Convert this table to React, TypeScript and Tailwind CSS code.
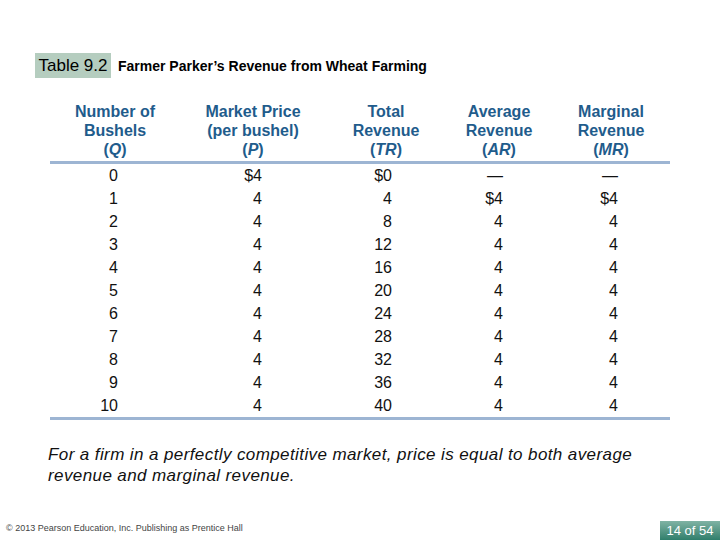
import React from "react";

const rows = [
  ["0", "$4", "$0", "—", "—"],
  ["1", "4", "4", "$4", "$4"],
  ["2", "4", "8", "4", "4"],
  ["3", "4", "12", "4", "4"],
  ["4", "4", "16", "4", "4"],
  ["5", "4", "20", "4", "4"],
  ["6", "4", "24", "4", "4"],
  ["7", "4", "28", "4", "4"],
  ["8", "4", "32", "4", "4"],
  ["9", "4", "36", "4", "4"],
  ["10", "4", "40", "4", "4"],
];

// right padding per column so the numbers line up like the slide
const cellPad = ["pr-[62px]", "pr-[64px]", "pr-[54px]", "pr-[49px]", "pr-[52px]"];

const headers: [string, string, string][] = [
  ["Number of", "Bushels", "Q"],
  ["Market Price", "(per bushel)", "P"],
  ["Total", "Revenue", "TR"],
  ["Average", "Revenue", "AR"],
  ["Marginal", "Revenue", "MR"],
];

export default function App() {
  return (
    <div
      className="relative w-[720px] h-[540px] bg-white flex flex-col overflow-hidden"
      style={{ fontFamily: '"Liberation Sans", Arial, sans-serif' }}
    >
      {/* title */}
      <div className="flex items-center pt-[53px] pl-[35px]">
        <div className="h-[25px] w-[76px] bg-[#b5cdbf] flex items-center justify-center text-[17px] text-black">
          Table 9.2
        </div>
        <div className="ml-[7px] text-[14px] font-bold text-black pt-[2px]">
          Farmer Parker’s Revenue from Wheat Farming
        </div>
      </div>

      {/* table */}
      <div className="ml-[50px] w-[620px] mt-[24px]">
        <div className="grid grid-cols-[130px_146px_120px_106px_118px] text-[16px] font-bold leading-[19px] text-[#1f5c8c] text-center pb-[2px]">
          {headers.map(([a, b, c]) => (
            <div key={a}>
              <div>{a}</div>
              <div>{b}</div>
              <div>
                (<span className="italic">{c}</span>)
              </div>
            </div>
          ))}
        </div>
        <div className="h-[3px] bg-[#9db5d3]" />
        <div className="grid grid-cols-[130px_146px_120px_106px_118px] text-[16px] leading-[23px] text-[#111]">
          {rows.map((r, i) =>
            r.map((v, j) => (
              <div key={i + "-" + j} className={"text-right " + cellPad[j]}>
                {v}
              </div>
            ))
          )}
        </div>
        <div className="h-[3px] bg-[#9db5d3]" />
      </div>

      {/* note */}
      <p className="ml-[48px] mt-[24px] w-[600px] text-[17px] tracking-[0.4px] leading-[21px] italic text-[#111]">
        For a firm in a perfectly competitive market, price is equal to both average revenue and marginal
        revenue.
      </p>

      {/* footer */}
      <div className="mt-auto flex items-end justify-between">
        <div className="pl-[6px] pb-[5px] text-[9px] text-[#444]">
          © 2013 Pearson Education, Inc. Publishing as Prentice Hall
        </div>
        <div className="w-[60px] h-[19px] bg-gradient-to-b from-[#7fb3a4] to-[#2f7f6c] text-white text-[13px] flex items-center justify-center">
          14 of 54
        </div>
      </div>
    </div>
  );
}
